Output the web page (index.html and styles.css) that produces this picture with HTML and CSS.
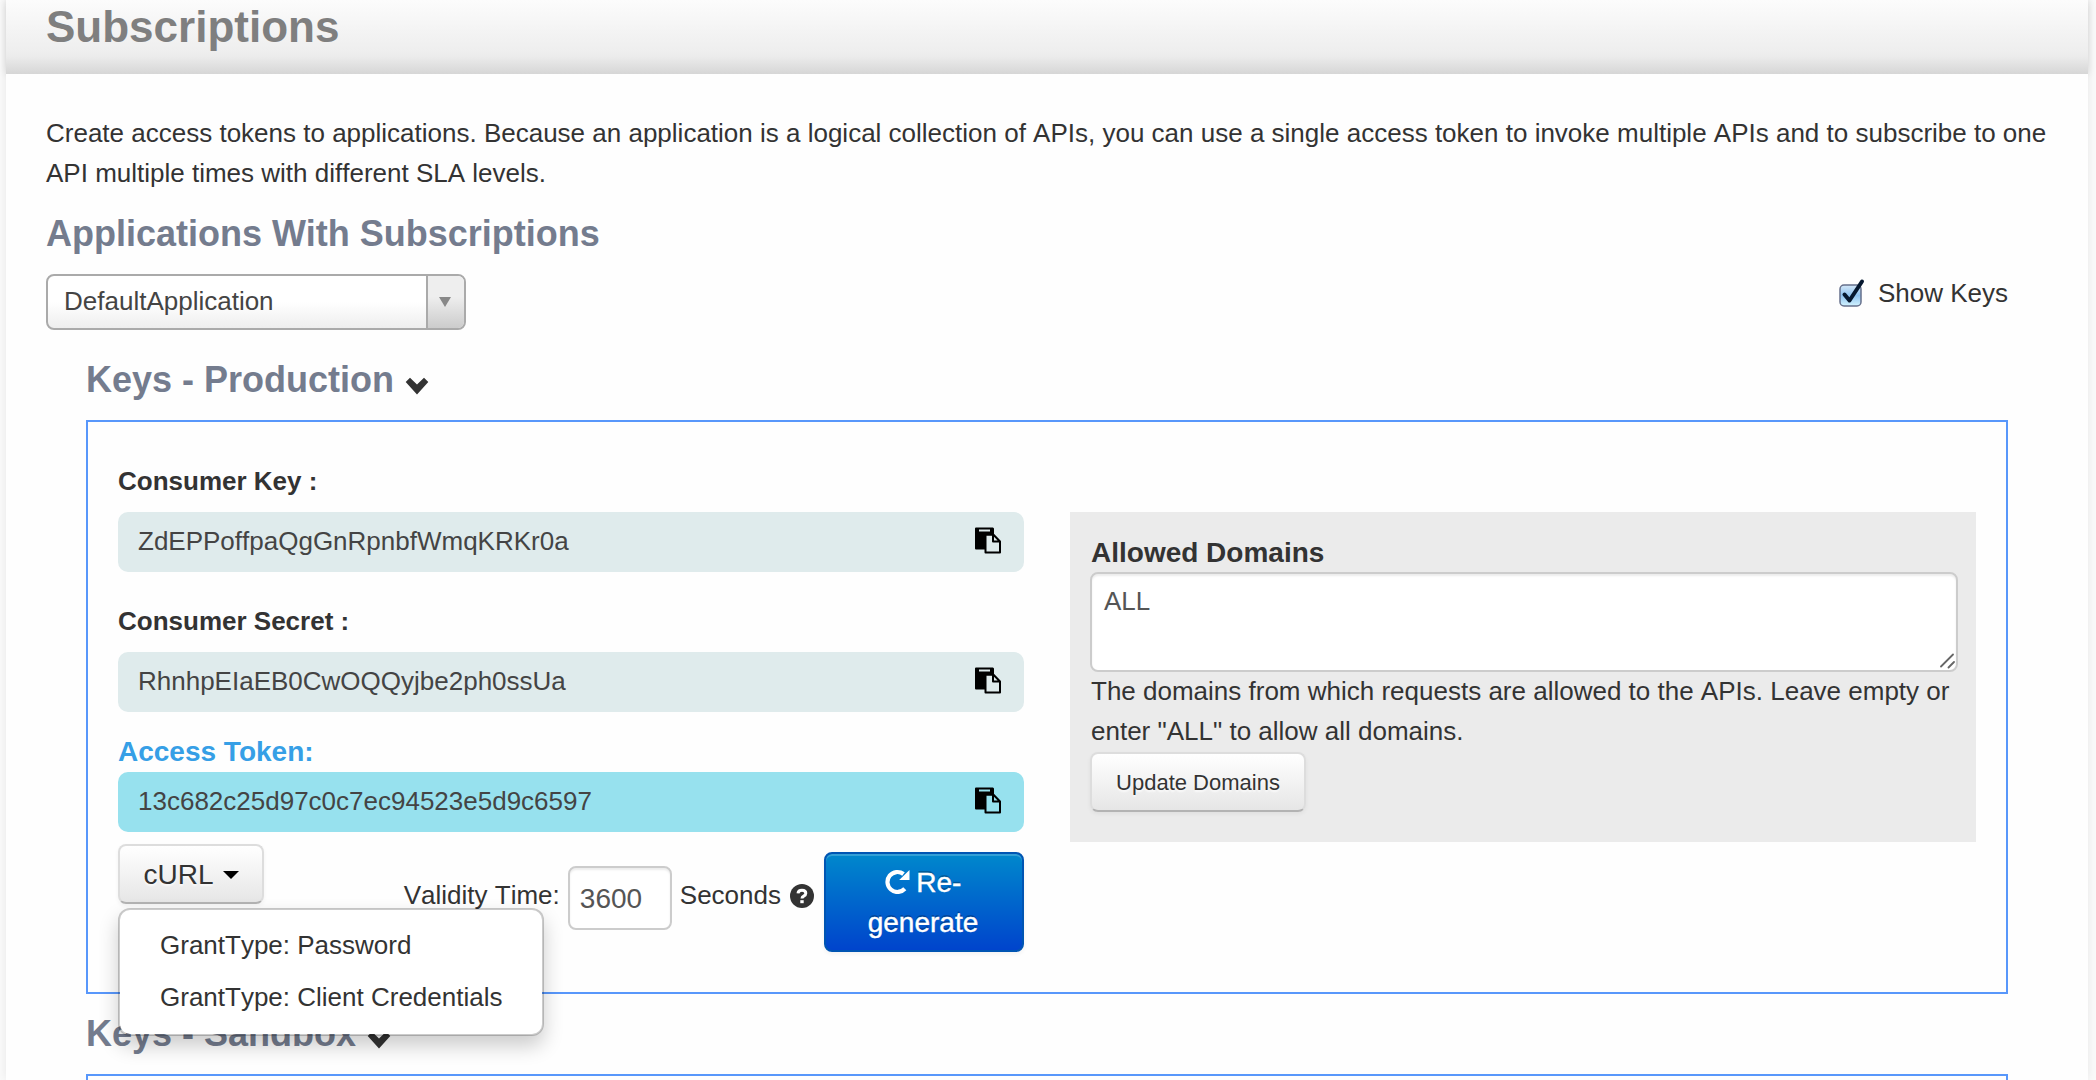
FILE: index.html
```html
<!DOCTYPE html>
<html lang="en">
<head>
<meta charset="utf-8">
<title>Subscriptions</title>
<link rel="stylesheet" href="styles.css">
</head>
<body>
<svg class="defs" width="0" height="0" aria-hidden="true">
  <symbol id="paste" viewBox="0 0 26 27">
    <path fill="currentColor" fill-rule="evenodd" d="M1 .5H18L19 1.500V7H12Q10 7 10 9V22.500H1Q0 22.500 0 21.500V1.500Q0 .5 1 .5ZM4 2.500V4.500H15V2.500Z"/>
    <path fill="none" stroke="currentColor" stroke-width="2" stroke-linejoin="round" d="M10.500 7.800H18.500L25 14.500V25.500H10.500ZM18 7.800V14.500H25"/>
  </symbol>
  <symbol id="chevron" viewBox="0 0 24 18">
    <path fill="#333" d="M5 .8 12 7.500 19 .8 23.300 5 12 17.500.7 5Z"/>
  </symbol>
</svg>
<main class="panel">
  <header class="page-head"><h1>Subscriptions</h1></header>
  <div class="content">
    <p class="intro">Create access tokens to applications. Because an application is a logical collection of APIs, you can use a single access token to invoke multiple APIs and to subscribe to one API multiple times with different SLA levels.</p>
    <h2>Applications With Subscriptions</h2>
    <div class="toolbar">
      <div class="select"><span class="select-value">DefaultApplication</span><span class="select-arrow"><i></i></span></div>
      <label class="show-keys">
        <svg width="28" height="32" viewBox="0 0 28 32">
          <defs><linearGradient id="cb" x1="0" y1="0" x2="0" y2="1"><stop offset="0" stop-color="#d5e8f8"/><stop offset=".5" stop-color="#8fc3ef"/><stop offset="1" stop-color="#d2f3ff"/></linearGradient></defs>
          <rect x="2" y="7" width="21" height="21" rx="4" fill="url(#cb)" stroke="#66708c" stroke-width="1.500"/>
          <path d="M6.500 16.500 11.500 22.500 24 3.500" fill="none" stroke="#06182f" stroke-width="4" stroke-linecap="round" stroke-linejoin="round"/>
        </svg>
        <span>Show Keys</span>
      </label>
    </div>
    <section class="keys">
      <h2>Keys - Production <svg class="chev" width="24" height="18"><use href="#chevron"/></svg></h2>
      <div class="box">
        <div class="col">
          <div class="label">Consumer Key :</div>
          <div class="field"><span>ZdEPPoffpaQgGnRpnbfWmqKRKr0a</span><svg width="26" height="27"><use href="#paste"/></svg></div>
          <div class="label second">Consumer Secret :</div>
          <div class="field"><span>RhnhpEIaEB0CwOQQyjbe2ph0ssUa</span><svg width="26" height="27"><use href="#paste"/></svg></div>
          <div class="label token">Access Token:</div>
          <div class="field cyan"><span>13c682c25d97c0c7ec94523e5d9c6597</span><svg width="26" height="27"><use href="#paste"/></svg></div>
          <div class="actions">
            <div class="dropdown">
              <button class="btn curl">cURL<i class="caret"></i></button>
              <ul class="menu"><li>GrantType: Password</li><li>GrantType: Client Credentials</li></ul>
            </div>
            <div class="validity">
              <span>Validity Time:</span>
              <input type="text" value="3600">
              <span class="seconds">Seconds</span>
              <svg class="help" width="24" height="24" viewBox="0 0 24 24"><circle cx="12" cy="12" r="12" fill="#333"/><path d="M8 9.300Q8.300 6.200 12 6.200 15.800 6.200 15.800 9.200 15.800 11 13.700 12.100 12 13 12 14.600" fill="none" stroke="#fff" stroke-width="3"/><rect x="10.300" y="16.200" width="3.400" height="3" fill="#fff"/></svg>
            </div>
            <button class="regen"><svg width="25" height="25" viewBox="0 0 25 25"><path d="M19.800 19.800A10 10 0 1 1 18.500 5" fill="none" stroke="#fff" stroke-width="4.200"/><path d="M24.500 1V11H14.200Z" fill="#fff"/></svg> Re-<br>generate</button>
          </div>
        </div>
        <div class="domains">
          <h3>Allowed Domains</h3>
          <div class="textarea"><span>ALL</span><svg width="16" height="16" viewBox="0 0 16 16"><path d="M2 13.500 14 1.500M9.500 14.500 15 9" stroke="#666" stroke-width="1.800" stroke-linecap="round"/></svg></div>
          <p>The domains from which requests are allowed to the APIs. Leave empty or enter "ALL" to allow all domains.</p>
          <button class="btn update">Update Domains</button>
        </div>
      </div>
      <h2 class="sandbox">Keys - Sandbox <svg class="chev" width="24" height="18"><use href="#chevron"/></svg></h2>
      <div class="box empty"></div>
    </section>
  </div>
</main>
</body>
</html>
```
FILE: styles.css
```css
* { box-sizing: border-box; }
html, body { height: 100%; }
body { margin: 0; padding: 0 8px 0 6px; overflow: hidden; background: #fafafa; color: #333; font: 26px/40px "Liberation Sans", Arial, sans-serif; font-kerning: none; }
h1, h2, h3, p, ul { margin: 0; padding: 0; }
h1, h2, h3, .label { font-kerning: normal; }
.defs { position: absolute; }
.panel { height: 1080px; background: #fefefe; box-shadow: 0 0 10px rgba(0,0,0,.08); }
.page-head { height: 74px; padding-left: 40px; background: linear-gradient(#fcfcfc, #eee 52px, #ebebeb 57px, #d6d6d6); box-shadow: 0 0 8px rgba(0,0,0,.12); }
h1 { font-size: 44px; line-height: 54px; color: #7f7f7f; }
.content { position: relative; height: 1006px; padding: 39px 40px 0; background: #fefefe; overflow: hidden; }
.intro { height: 80px; }
h2 { font-size: 36px; line-height: 40px; color: #747c8e; }
.intro + h2 { margin-top: 21px; }
.toolbar { display: flex; justify-content: space-between; margin-top: 20px; height: 56px; padding-right: 40px; }
.select { display: flex; width: 420px; height: 56px; border: 2px solid #aaa; border-radius: 8px; background: linear-gradient(#fff 50%, #eee); overflow: hidden; color: #444; }
.select-value { flex: 1; padding: 5px 0 0 16px; }
.select-arrow { display: flex; align-items: center; justify-content: center; width: 38px; padding-right: 2px; border-left: 2px solid #aaa; background: linear-gradient(#eee 40%, #ccc); }
.select-arrow i { border: 6px solid transparent; border-top: 10px solid #888; border-bottom: 0; }
.show-keys { display: flex; gap: 12px; align-items: flex-start; }
.show-keys svg { margin-top: 4px; }
.show-keys span { margin-top: -1px; }
.keys { padding: 30px 40px 0; }
.keys h2 { height: 60px; }
.chev { margin-left: 1px; vertical-align: -3px; }
.box { display: flex; gap: 46px; height: 574px; border: 2px solid #5897fb; padding: 0 30px; }
.col { width: 906px; padding-top: 39px; }
.label { height: 51px; font-weight: bold; }
.label.second { margin-top: 29px; }
.label.token { margin-top: 20px; height: 40px; font-size: 28px; line-height: 40px; color: #369fe6; }
.field { display: flex; align-items: center; justify-content: space-between; height: 60px; padding: 0 23px 3px 20px; border-radius: 10px; background: #dfebec; color: #444; }
.field svg { color: #000; }
.cyan { background: #97e1ee; }
.actions { display: flex; justify-content: space-between; padding-top: 12px; }
.dropdown { position: relative; width: 146px; }
button { font: 28px/40px "Liberation Sans", Arial, sans-serif; }
.btn { color: #333; border: 2px solid #ddd; border-bottom-color: #b3b3b3; border-radius: 8px; background: linear-gradient(#fff, #e6e6e6); box-shadow: 0 2px 4px rgba(0,0,0,.05); height: 60px; padding: 1px 0 0; text-shadow: 0 2px 2px rgba(255,255,255,.75); }
.curl { width: 146px; display: flex; justify-content: center; align-items: center; gap: 9px; }
.caret { border: 8px solid transparent; border-top-color: #000; border-bottom: 0; }
.menu { position: absolute; z-index: 2; left: 0; top: 64px; width: 426px; height: 128px; padding: 9px 0; list-style: none; background: #fff; border: 2px solid rgba(0,0,0,.2); background-clip: padding-box; border-radius: 12px; box-shadow: 0 10px 20px rgba(0,0,0,.2); }
.menu li { padding: 6px 40px; white-space: nowrap; }
.validity { display: flex; align-items: flex-start; margin-left: auto; padding: 30px 10px 0 0; white-space: nowrap; }
.validity > * { margin-top: 1px; }
.validity input { width: 104px; height: 64px; margin: -8px 8px 0 8px; padding: 1px 10px 0; border: 2px solid #ccc; border-radius: 8px; color: #555; font: 28px "Liberation Sans", Arial, sans-serif; box-shadow: inset 0 2px 2px rgba(0,0,0,.075); background: #fff; }
.validity .help { margin: 10px 0 0 9px; }
.regen { width: 200px; height: 100px; margin-top: 8px; padding: 1px 2px 0 0; color: #fff; border: 2px solid #0055b3; border-radius: 8px; background: linear-gradient(#08c, #04c); box-shadow: inset 0 2px 0 rgba(255,255,255,.2), 0 2px 4px rgba(0,0,0,.05); text-shadow: 0 -2px 0 rgba(0,0,0,.25); -webkit-text-stroke: .4px #fff; }
.regen svg { vertical-align: -2px; margin-right: -1px; }
.domains { width: 906px; height: 330px; margin-top: 90px; padding: 20px 18px 0 20px; background: #ebebeb; }
h3 { height: 40px; padding-left: 1px; font-size: 28px; line-height: 42px; }
.textarea { display: flex; justify-content: space-between; align-items: flex-end; height: 100px; border: 2px solid #ccc; border-radius: 8px; background: #fff; box-shadow: inset 0 2px 2px rgba(0,0,0,.075); padding: 7px 1px 1px 12px; color: #555; }
.textarea span { align-self: flex-start; }
.domains p { height: 80px; margin: -1px 0 1px; padding-left: 1px; }
.update { width: 216px; font-size: 22px; }
.sandbox { padding-top: 20px; }
.keys h2.sandbox { height: 80px; }
.empty { height: 100px; }
```
